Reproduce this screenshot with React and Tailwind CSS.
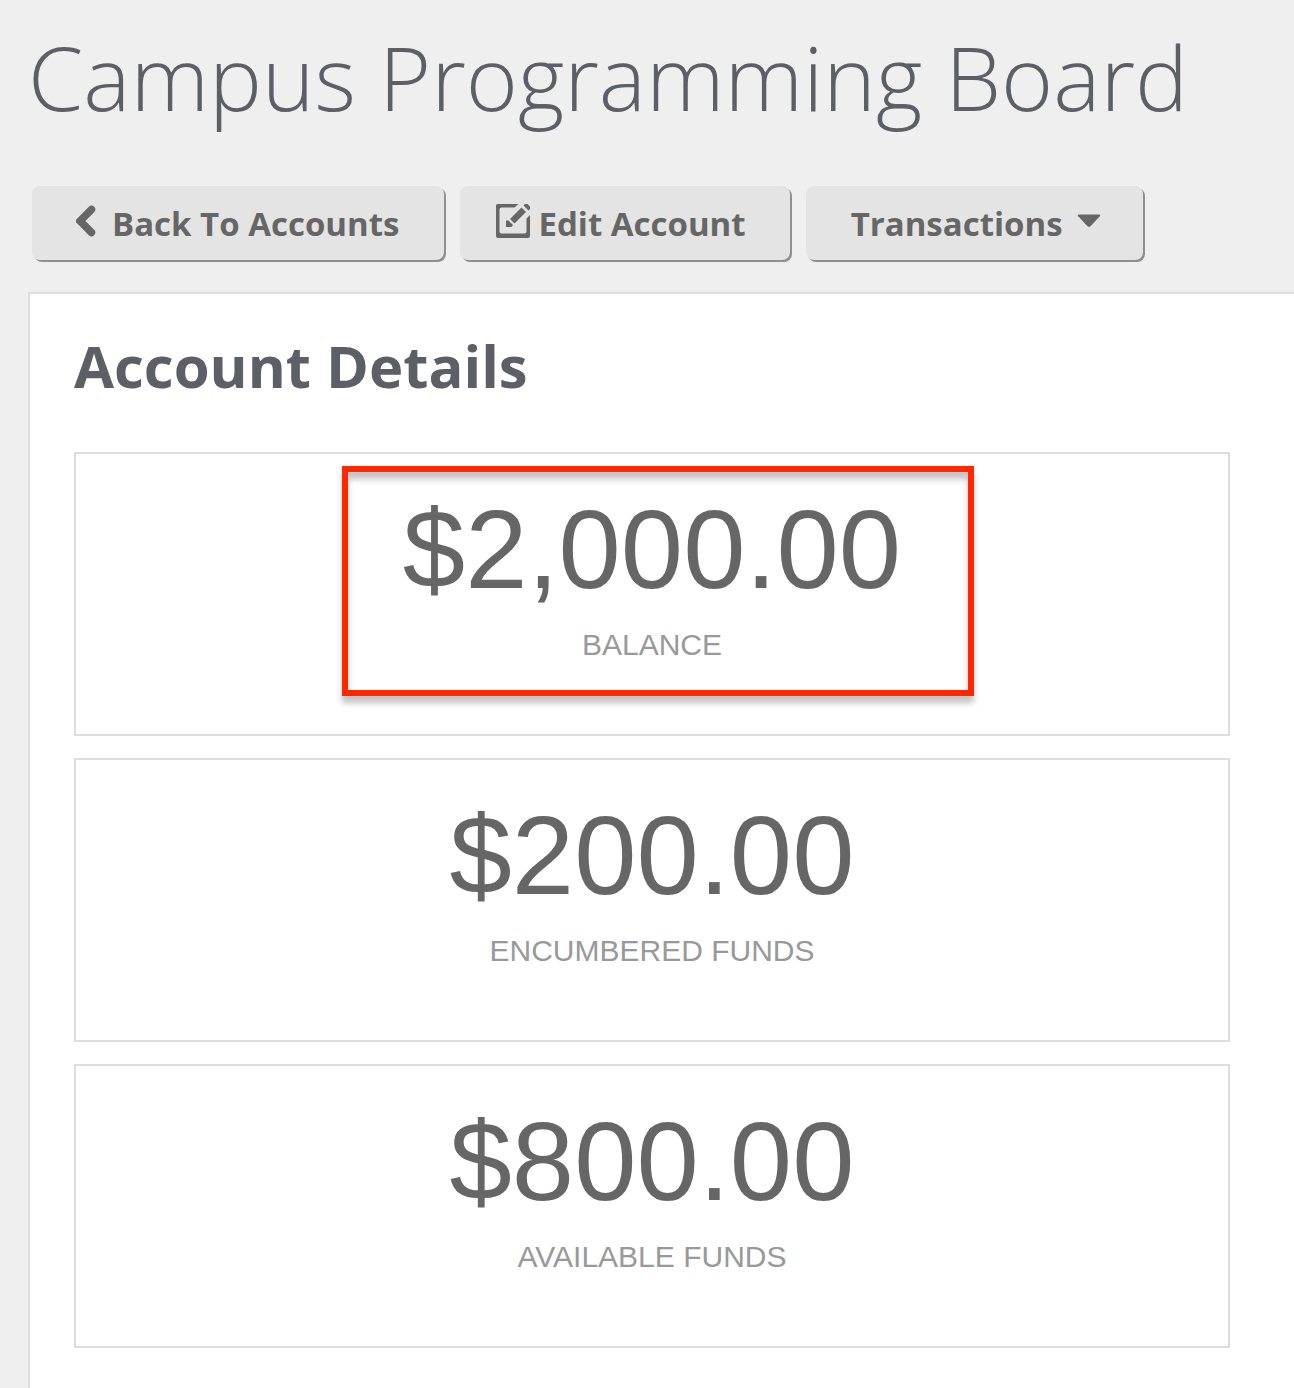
const balances = [
  { label: "Balance", amount: "$2,000.00", highlighted: true },
  { label: "Encumbered Funds", amount: "$200.00" },
  { label: "Available Funds", amount: "$800.00" },
];

const ChevronIcon = () => (
  <svg viewBox="0 0 20 32" className="w-5 h-8 -mt-1.5" fill="none" stroke="currentColor" strokeWidth="7.500" aria-hidden="true">
    <path d="M15.500 4.500L4 16L15.500 27.500" strokeLinecap="round" strokeLinejoin="miter" />
  </svg>
);

const CaretIcon = () => (
  <svg viewBox="0 0 24 14" className="w-6 h-3.5 -mt-1.5" fill="currentColor" aria-hidden="true">
    <path d="M2 0.500H22Q24 0.500 22.800 2.200L13.500 12.200Q12 13.500 10.500 12.200L1.200 2.200Q0 0.500 2 0.500Z" />
  </svg>
);

const EditIcon = () => (
  <svg viewBox="0 0 34 34" className="w-[34px] h-[34px] -mt-1.5" fill="currentColor" aria-hidden="true">
    <path d="M1.500 0H22.500L18.500 3.500H5.500Q3.500 3.500 3.500 5.500V27.500Q3.500 29.500 5.500 29.500H28.500Q30.500 29.500 30.500 27.500V14.500L34 11V32Q34 34 32 34H2Q0 34 0 32V1.500Q0 0 1.500 0Z" />
    <path d="M25.500 3.500L30 8L18.500 19.500L14 15Z" />
    <path d="M10 16.500H12.500L17 21L15.500 23H10Z" />
    <path d="M27.500 1.500L29 0H31.500L34 2.500V5L32.500 6.500Z" />
  </svg>
);

const ToolbarButton = ({ className = "", children, ...props }) => (
  <button
    type="button"
    className={`flex items-center h-[74px] pt-0.5 rounded-lg bg-[#e4e4e4] text-[#666] text-[33px] font-bold whitespace-nowrap shadow-[2px_2px_0_#8f8f8f] cursor-pointer ${className}`}
    {...props}
  >
    {children}
  </button>
);

const BalanceCard = ({ label, amount, highlighted }) => (
  <div className="relative h-[284px] border-2 border-[#ddd] pt-8 text-center font-['Liberation_Sans',Arial,sans-serif]">
    <p className="text-[112px] leading-[128px] text-[#666]">{amount}</p>
    <p className="text-[30px] leading-[62px] text-[#999] uppercase">{label}</p>

    {/* Callout frame */}
    {highlighted && (
      <div className="absolute top-3 left-1/2 -translate-x-1/2 ml-1.5 w-[632px] h-[230px] border-6 border-[#ff2600] shadow-[0_7px_6px_rgba(0,0,0,0.24),inset_0_7px_6px_rgba(0,0,0,0.24)]" />
    )}
  </div>
);

const App = () => {
  return (
    <div className="min-h-screen flex flex-col overflow-hidden bg-[#efefef] font-['Open_Sans',sans-serif]">
      <header className="px-8 pt-3">
        <h1 className="-ml-1 text-[89px] leading-[130px] font-light text-[#5c6066] whitespace-nowrap">
          Campus Programming Board
        </h1>
        <div className="flex gap-4 mt-11">
          <ToolbarButton className="pl-11 pr-[45px] gap-4">
            <ChevronIcon />
            Back To Accounts
          </ToolbarButton>
          <ToolbarButton className="pl-9 pr-11 gap-2">
            <EditIcon />
            Edit Account
          </ToolbarButton>
          <ToolbarButton className="pl-[45px] pr-[42px] gap-3.5" aria-haspopup="menu">
            Transactions
            <CaretIcon />
          </ToolbarButton>
        </div>
      </header>

      <main className="flex-1 ml-7 mt-8 pl-11 pr-16 pt-8 pb-10 bg-white border-t-2 border-l-2 border-[#ddd]">
        <h2 className="text-[58px] leading-[80px] font-bold text-[#5c6066]">Account Details</h2>
        <div className="flex flex-col gap-[22px] mt-[46px]">
          {balances.map((item) => (
            <BalanceCard key={item.label} {...item} />
          ))}
        </div>
      </main>
    </div>
  );
};

export default App;
